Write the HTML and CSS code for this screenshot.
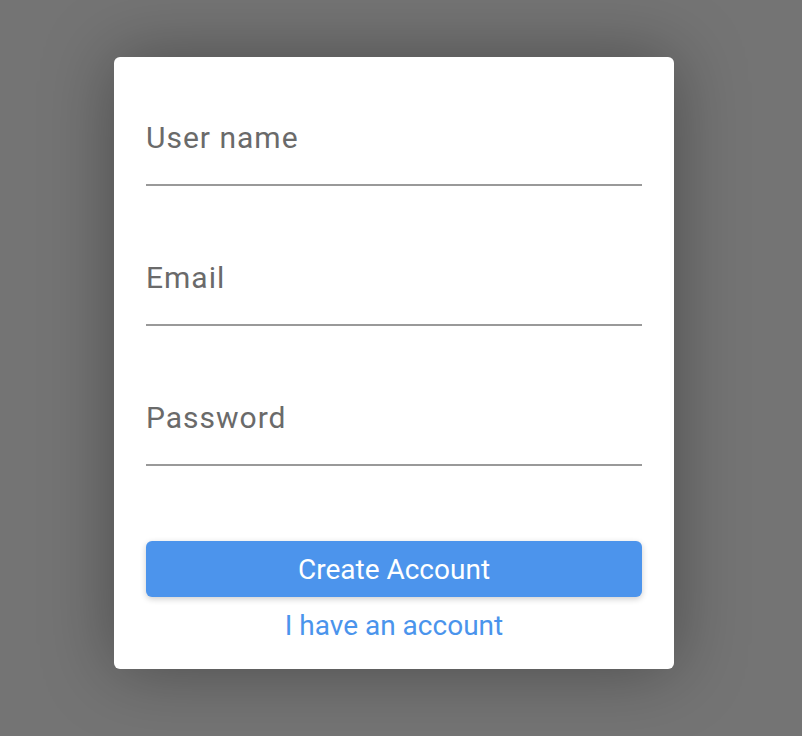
FILE: index.html
```html
<!DOCTYPE html>
<html lang="en">
<head>
    <meta charset="UTF-8">
    <title>Create Account</title>
    <link rel="stylesheet" href="styles.css">
</head>
<body>
    <div class="signup">
        <input type="text" class="field" placeholder="User name">
        <input type="email" class="field" placeholder="Email">
        <input type="password" class="field" placeholder="Password">
        <button class="create-btn">Create Account</button>
        <a href="#" class="login-link">I have an account</a>
    </div>
</body>
</html>
```

FILE: styles.css
```css
body {
    font-family: Roboto, "Liberation Sans", sans-serif;
    background-color: #747474;
    margin: 0;
    padding: 57px 0 0 114px;
    height: 736px;
    box-sizing: border-box;
}

.signup {
    background-color: #fff;
    border-radius: 6px;
    box-shadow: 0 0 70px rgba(0, 0, 0, 0.35);
    width: 560px;
    height: 612px;
    box-sizing: border-box;
    padding: 33px 32px 0;
    display: flex;
    flex-direction: column;
}

.field {
    height: 96px;
    box-sizing: border-box;
    border: none;
    border-bottom: 2px solid #999;
    padding: 0;
    margin-bottom: 44px;
    font-family: inherit;
    font-size: 30px;
    letter-spacing: 1px;
    color: #444;
    outline: none;
}

.field::placeholder {
    color: #6a6a6a;
}

.field:last-of-type {
    margin-bottom: 75px;
}

.create-btn {
    height: 56px;
    border: none;
    border-radius: 6px;
    background-color: #4c94ec;
    color: #fff;
    font-family: inherit;
    font-size: 28px;
    box-shadow: 0 2px 6px rgba(0, 0, 0, 0.2);
    cursor: pointer;
}

.login-link {
    margin-top: 12px;
    text-align: center;
    color: #4a94ec;
    font-size: 28px;
    text-decoration: none;
}
```
